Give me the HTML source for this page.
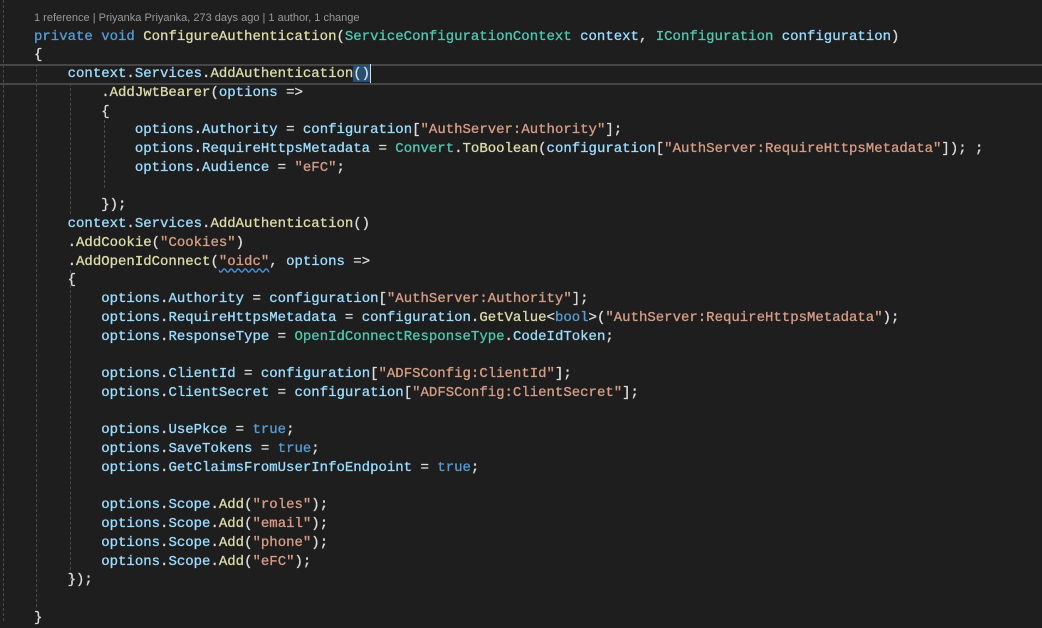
<!DOCTYPE html>
<html><head><meta charset="utf-8"><style>
body{margin:0;width:1042px;height:621px;background:#1e1e1e;overflow:hidden;position:relative;font-family:"Liberation Mono",monospace;}
.l{position:absolute;left:34px;height:18.75px;line-height:18.75px;font-size:14px;white-space:pre;color:#dcdcdc;-webkit-text-stroke:0.3px currentColor;margin-top:1px;}
.k{color:#569cd6}.t{color:#4ec9b0}.s{color:#d69d85}.m{color:#dcdcaa}.v{color:#9cdcfe}
.g{position:absolute;width:0;border-left:1px dashed #4a4a4a;}
.lens{position:absolute;left:34px;top:12px;font-family:"Liberation Sans",sans-serif;font-size:11px;color:#999;}
</style></head><body>
<div class="g" style="left:3px;top:0;height:621px"></div>
<div class="g" style="left:36px;top:64px;height:543px"></div>
<div class="g" style="left:70px;top:83px;height:131px"></div>
<div class="g" style="left:70px;top:270px;height:310px"></div>
<div class="g" style="left:104px;top:120px;height:68px"></div>
<div style="position:absolute;left:0;top:64px;width:1042px;height:17px;border-top:2px solid #464646;border-bottom:2px solid #464646;"></div>
<div style="position:absolute;left:353px;top:65px;width:17px;height:17px;background:#264f78"></div>
<div style="position:absolute;left:370px;top:64px;width:1px;height:19px;background:#dcdcdc"></div>
<div class="lens">1 reference | Priyanka Priyanka, 273 days ago | 1 author, 1 change</div>
<div class="l" style="top:26.6px"><span class="k">private</span> <span class="k">void</span> <span class="m">ConfigureAuthentication</span>(<span class="t">ServiceConfigurationContext</span> <span class="v">context</span>, <span class="t">IConfiguration</span> <span class="v">configuration</span>)</div>
<div class="l" style="top:45.35px">{</div>
<div class="l" style="top:64.1px">    <span class="v">context</span>.<span class="v">Services</span>.<span class="m">AddAuthentication</span>()</div>
<div class="l" style="top:82.85px">        .<span class="m">AddJwtBearer</span>(<span class="v">options</span> =&gt;</div>
<div class="l" style="top:101.6px">        {</div>
<div class="l" style="top:120.35px">            <span class="v">options</span>.<span class="v">Authority</span> = <span class="v">configuration</span>[<span class="s">"AuthServer:Authority"</span>];</div>
<div class="l" style="top:139.1px">            <span class="v">options</span>.<span class="v">RequireHttpsMetadata</span> = <span class="t">Convert</span>.<span class="m">ToBoolean</span>(<span class="v">configuration</span>[<span class="s">"AuthServer:RequireHttpsMetadata"</span>]); ;</div>
<div class="l" style="top:157.85px">            <span class="v">options</span>.<span class="v">Audience</span> = <span class="s">"eFC"</span>;</div>
<div class="l" style="top:195.35px">        });</div>
<div class="l" style="top:214.1px">    <span class="v">context</span>.<span class="v">Services</span>.<span class="m">AddAuthentication</span>()</div>
<div class="l" style="top:232.85px">    .<span class="m">AddCookie</span>(<span class="s">"Cookies"</span>)</div>
<div class="l" style="top:251.6px">    .<span class="m">AddOpenIdConnect</span>(<span class="s" style="text-decoration:underline wavy #4a90d9;text-underline-offset:3px;-webkit-text-stroke:0.3px #d69d85">"oidc"</span>, <span class="v">options</span> =&gt;</div>
<div class="l" style="top:270.35px">    {</div>
<div class="l" style="top:289.1px">        <span class="v">options</span>.<span class="v">Authority</span> = <span class="v">configuration</span>[<span class="s">"AuthServer:Authority"</span>];</div>
<div class="l" style="top:307.85px">        <span class="v">options</span>.<span class="v">RequireHttpsMetadata</span> = <span class="v">configuration</span>.<span class="m">GetValue</span>&lt;<span class="k">bool</span>&gt;(<span class="s">"AuthServer:RequireHttpsMetadata"</span>);</div>
<div class="l" style="top:326.6px">        <span class="v">options</span>.<span class="v">ResponseType</span> = <span class="t">OpenIdConnectResponseType</span>.<span class="v">CodeIdToken</span>;</div>
<div class="l" style="top:364.1px">        <span class="v">options</span>.<span class="v">ClientId</span> = <span class="v">configuration</span>[<span class="s">"ADFSConfig:ClientId"</span>];</div>
<div class="l" style="top:382.85px">        <span class="v">options</span>.<span class="v">ClientSecret</span> = <span class="v">configuration</span>[<span class="s">"ADFSConfig:ClientSecret"</span>];</div>
<div class="l" style="top:420.35px">        <span class="v">options</span>.<span class="v">UsePkce</span> = <span class="k">true</span>;</div>
<div class="l" style="top:439.1px">        <span class="v">options</span>.<span class="v">SaveTokens</span> = <span class="k">true</span>;</div>
<div class="l" style="top:457.85px">        <span class="v">options</span>.<span class="v">GetClaimsFromUserInfoEndpoint</span> = <span class="k">true</span>;</div>
<div class="l" style="top:495.35px">        <span class="v">options</span>.<span class="v">Scope</span>.<span class="m">Add</span>(<span class="s">"roles"</span>);</div>
<div class="l" style="top:514.1px">        <span class="v">options</span>.<span class="v">Scope</span>.<span class="m">Add</span>(<span class="s">"email"</span>);</div>
<div class="l" style="top:532.85px">        <span class="v">options</span>.<span class="v">Scope</span>.<span class="m">Add</span>(<span class="s">"phone"</span>);</div>
<div class="l" style="top:551.6px">        <span class="v">options</span>.<span class="v">Scope</span>.<span class="m">Add</span>(<span class="s">"eFC"</span>);</div>
<div class="l" style="top:570.35px">    });</div>
<div class="l" style="top:607.85px">}</div>
</body></html>
